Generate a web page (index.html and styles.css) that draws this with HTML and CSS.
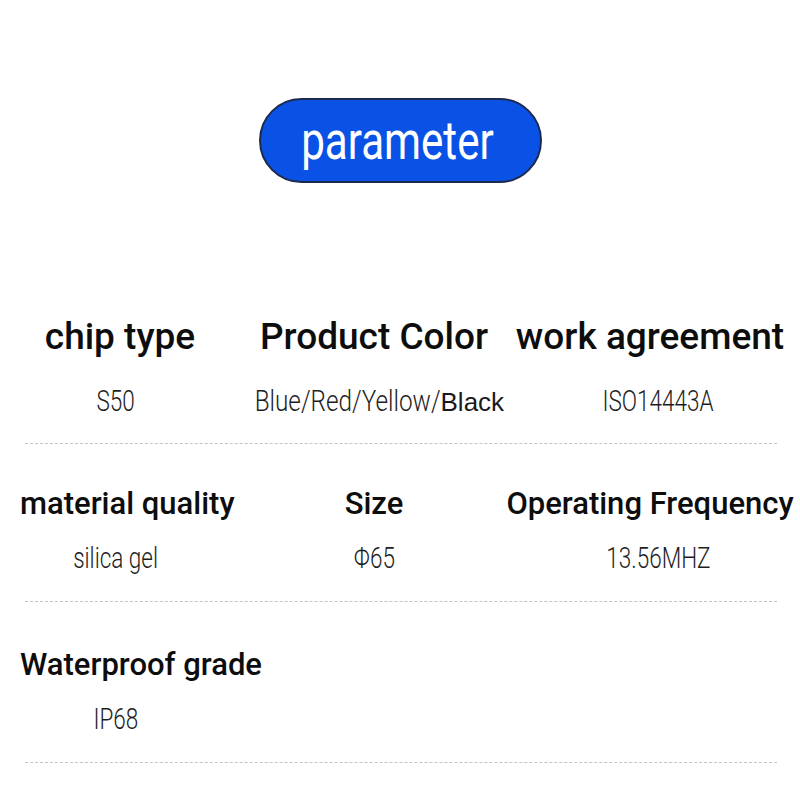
FILE: index.html
```html
<!DOCTYPE html>
<html lang="en">
<head>
<meta charset="utf-8">
<title>parameter</title>
<link rel="stylesheet" href="styles.css">
</head>
<body>
<main class="page">
  <header class="title">
    <div class="pill"><span class="pill__text">parameter</span></div>
  </header>

  <section class="specs">
    <div class="row row--lead">
      <div class="cell">
        <h3 class="label label--lg label--nudge">chip type</h3>
        <p class="value"><span class="value__text">S50</span></p>
      </div>
      <div class="cell">
        <h3 class="label label--lg">Product Color</h3>
        <p class="value value--mixed"><span class="value__text value__text--tail">Blue/Red/Yellow/</span><span class="value__alt">Black</span></p>
      </div>
      <div class="cell cell--end">
        <h3 class="label label--lg">work agreement</h3>
        <p class="value"><span class="value__text">ISO14443A</span></p>
      </div>
    </div>
    <div class="rule"></div>

    <div class="row">
      <div class="cell">
        <h3 class="label label--start">material quality</h3>
        <p class="value"><span class="value__text">silica gel</span></p>
      </div>
      <div class="cell">
        <h3 class="label">Size</h3>
        <p class="value"><span class="value__text">Φ65</span></p>
      </div>
      <div class="cell cell--end">
        <h3 class="label">Operating Frequency</h3>
        <p class="value"><span class="value__text">13.56MHZ</span></p>
      </div>
    </div>
    <div class="rule"></div>

    <div class="row row--last">
      <div class="cell">
        <h3 class="label label--start">Waterproof grade</h3>
        <p class="value"><span class="value__text">IP68</span></p>
      </div>
      <div class="cell"></div>
      <div class="cell"></div>
    </div>
    <div class="rule"></div>
  </section>
</main>
</body>
</html>
```

FILE: styles.css
```css
* { box-sizing: border-box; }

html, body {
  margin: 0;
  padding: 0;
  background: #ffffff;
}

body {
  font-family: Roboto, "Liberation Sans", sans-serif;
  color: #111111;
}

.page {
  width: 800px;
  height: 800px;
  overflow: hidden;
}

.title {
  display: flex;
  justify-content: center;
  padding-top: 98px;
}

.pill {
  width: 283px;
  height: 85px;
  margin-left: 1px;
  border: 2px solid #1c2a4e;
  border-radius: 43px;
  background: #0a52e6;
  display: flex;
  align-items: center;
  justify-content: center;
}

.pill__text {
  display: inline-block;
  font-size: 54px;
  line-height: 1;
  font-weight: 400;
  color: #ffffff;
  transform: scaleX(0.78);
  margin-left: -6px;
}

.specs {
  margin-top: 135px;
}

.row {
  display: grid;
  grid-template-columns: 232px 284px 284px;
  padding-top: 44px;
}

.row--lead {
  padding-top: 0;
}

.row--last {
  padding-top: 47px;
}

.cell {
  display: flex;
  flex-direction: column;
  align-items: center;
  min-width: 0;
}

.label {
  margin: 0;
  font-size: 31px;
  line-height: 31px;
  font-weight: 500;
  color: #0d0d0d;
  white-space: nowrap;
}

.label--lg {
  font-size: 37px;
  line-height: 37px;
}

.label--nudge {
  margin-left: 8px;
}

.label--start {
  align-self: flex-start;
  margin-left: 20px;
}

.cell--end .label {
  margin-right: 16px;
}

.value {
  margin: 24px 0 0;
  font-size: 30px;
  line-height: 30px;
  font-weight: 300;
  color: #1e1e1e;
  white-space: nowrap;
  display: flex;
  justify-content: center;
  align-items: baseline;
}

.row--lead .value {
  margin-top: 31px;
}

.value__text {
  display: inline-block;
  transform: scaleX(0.75);
}

.value--mixed {
  padding-left: 10px;
}

.value__text--tail {
  transform: scaleX(0.81);
  transform-origin: right center;
  margin-left: -43px;
}

.value__alt {
  font-family: "Liberation Sans", Arial, sans-serif;
  font-size: 26px;
  font-weight: 400;
  color: #1a1a1a;
}

.rule {
  margin: 28px 23px 0 25px;
  border-top: 1px dashed #c4c4c4;
}

.row--lead + .rule {
  margin-top: 26px;
}
```
